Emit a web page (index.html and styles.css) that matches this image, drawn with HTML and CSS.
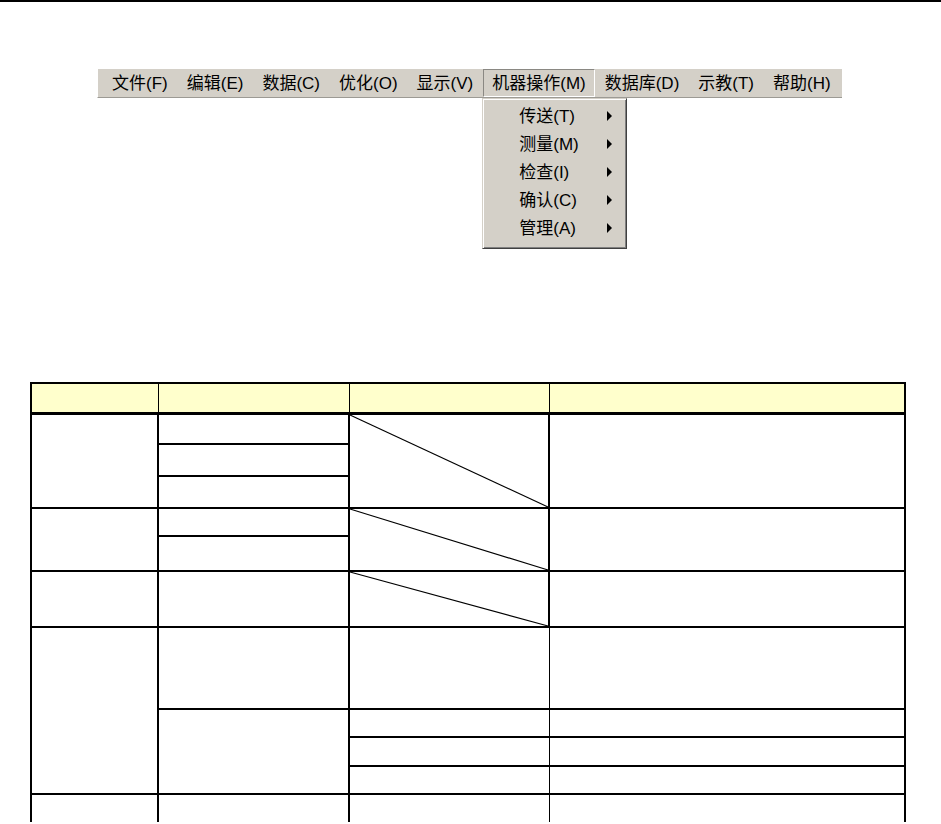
FILE: index.html
```html
<!DOCTYPE html>
<html lang="zh-CN">
<head>
<meta charset="utf-8">
<title>机器操作菜单</title>
<link rel="stylesheet" href="styles.css">
</head>
<body>
<div class="topline"></div>
<div class="menubar">
  <div class="mi">文件(F)</div>
  <div class="mi">编辑(E)</div>
  <div class="mi">数据(C)</div>
  <div class="mi">优化(O)</div>
  <div class="mi">显示(V)</div>
  <div class="mi active">机器操作(M)
    <div class="dropdown">
      <div class="di"><span>传送(T)</span><i class="arrow"></i></div>
      <div class="di"><span>测量(M)</span><i class="arrow"></i></div>
      <div class="di"><span>检查(I)</span><i class="arrow"></i></div>
      <div class="di"><span>确认(C)</span><i class="arrow"></i></div>
      <div class="di"><span>管理(A)</span><i class="arrow"></i></div>
    </div>
  </div>
  <div class="mi">数据库(D)</div>
  <div class="mi">示教(T)</div>
  <div class="mi">帮助(H)</div>
</div>

<div class="tbl">
  <div class="c h c1"></div>
  <div class="c h c2"></div>
  <div class="c h c3"></div>
  <div class="c h c4"></div>

  <div class="c c1 ga"></div>
  <div class="c c2 r2"></div>
  <div class="c c2 r3"></div>
  <div class="c c2 r4"></div>
  <div class="c c3 ga diag"><svg class="dl"><line x1="0" y1="0" x2="100%" y2="100%"/></svg></div>
  <div class="c c4 ga"></div>

  <div class="c c1 gb"></div>
  <div class="c c2 r5"></div>
  <div class="c c2 r6"></div>
  <div class="c c3 gb diag"><svg class="dl"><line x1="0" y1="0" x2="100%" y2="100%"/></svg></div>
  <div class="c c4 gb"></div>

  <div class="c c1 r7"></div>
  <div class="c c2 r7"></div>
  <div class="c c3 r7 diag"><svg class="dl"><line x1="0" y1="0" x2="100%" y2="100%"/></svg></div>
  <div class="c c4 r7"></div>

  <div class="c c1 gd"></div>
  <div class="c c2 r8"></div>
  <div class="c c3 r8 thin"></div>
  <div class="c c4 r8"></div>
  <div class="c c2 gd2"></div>
  <div class="c c3 r9 thin"></div>
  <div class="c c4 r9"></div>
  <div class="c c3 r10 thin"></div>
  <div class="c c4 r10"></div>
  <div class="c c3 r11 thin"></div>
  <div class="c c4 r11"></div>

  <div class="c c1 r12 last"></div>
  <div class="c c2 r12 last"></div>
  <div class="c c3 r12 last thin"></div>
  <div class="c c4 r12 last"></div>
</div>
</body>
</html>
```
FILE: styles.css
```css
html, body {
  margin: 0;
  padding: 0;
  background: #ffffff;
}
body {
  width: 941px;
  height: 824px;
  overflow: hidden;
  font-family: "Liberation Sans", "Noto Sans CJK SC", sans-serif;
  color: #000;
}
.topline {
  height: 2px;
  background: #000;
}

/* menu bar */
.menubar {
  margin-top: 67px;
  margin-left: 97px;
  width: 745px;
  height: 29px;
  box-sizing: border-box;
  background: #d4d0c8;
  border-left: 1px solid #ffffff;
  border-bottom: 1px solid #9c9a94;
  box-shadow: 0 1px 0 #ffffff;
  display: flex;
  padding-left: 5px;
}
.mi {
  position: relative;
  padding: 0 8px;
  margin-right: 1px;
  font-size: 17px;
  line-height: 27px;
  white-space: nowrap;
  border: 1px solid transparent;
}
.mi.active {
  border-color: #8a8883 #ffffff #ffffff #8a8883;
}
.dropdown {
  position: absolute;
  top: 28px;
  left: -2px;
  width: 145px;
  box-sizing: border-box;
  background: #d4d0c8;
  border: 1px solid;
  border-color: #d4d0c8 #404040 #404040 #d4d0c8;
  box-shadow: inset 1px 1px 0 #ffffff, inset -1px -1px 0 #808080;
  padding: 3px 14px 6px 36px;
  z-index: 5;
}
.di {
  display: flex;
  align-items: center;
  height: 28px;
  font-size: 17px;
}
.di span {
  flex: 1;
}
.arrow {
  display: block;
  width: 0;
  height: 0;
  border-left: 5px solid #000;
  border-top: 5px solid transparent;
  border-bottom: 5px solid transparent;
}

/* table */
.tbl {
  margin-top: 284px;
  margin-left: 30px;
  width: 876px;
  box-sizing: border-box;
  border: 2px solid #000;
  border-bottom: 0;
  display: grid;
  grid-template-columns: 127px 191px 200px 354px;
  grid-template-rows: 31px 30px 32px 32px 28px 35px 56px 82px 28px 29px 28px 27px;
}
.c {
  box-sizing: border-box;
  border-right: 2px solid #000;
  border-bottom: 2px solid #000;
  background: #fff;
  position: relative;
}
.c4 { border-right: 0; grid-column: 4; }
.c1 { grid-column: 1; }
.c2 { grid-column: 2; }
.c3 { grid-column: 3; }
.c3.thin { border-right-width: 1px; }
.h {
  grid-row: 1;
  background: #ffffcc;
  border-bottom-width: 3px;
  border-right-width: 1px;
}
.ga { grid-row: 2 / 5; }
.r2 { grid-row: 2; }
.r3 { grid-row: 3; }
.r4 { grid-row: 4; }
.gb { grid-row: 5 / 7; }
.r5 { grid-row: 5; }
.r6 { grid-row: 6; }
.r7 { grid-row: 7; }
.gd { grid-row: 8 / 12; }
.r8 { grid-row: 8; }
.gd2 { grid-row: 9 / 12; }
.r9 { grid-row: 9; }
.r10 { grid-row: 10; }
.r11 { grid-row: 11; }
.r12 { grid-row: 12; }
.c.last { border-bottom: 0; }

.dl {
  position: absolute;
  left: 0;
  top: 0;
  width: 100%;
  height: 100%;
  overflow: visible;
}
.dl line {
  stroke: #000;
  stroke-width: 1.2;
}
```
